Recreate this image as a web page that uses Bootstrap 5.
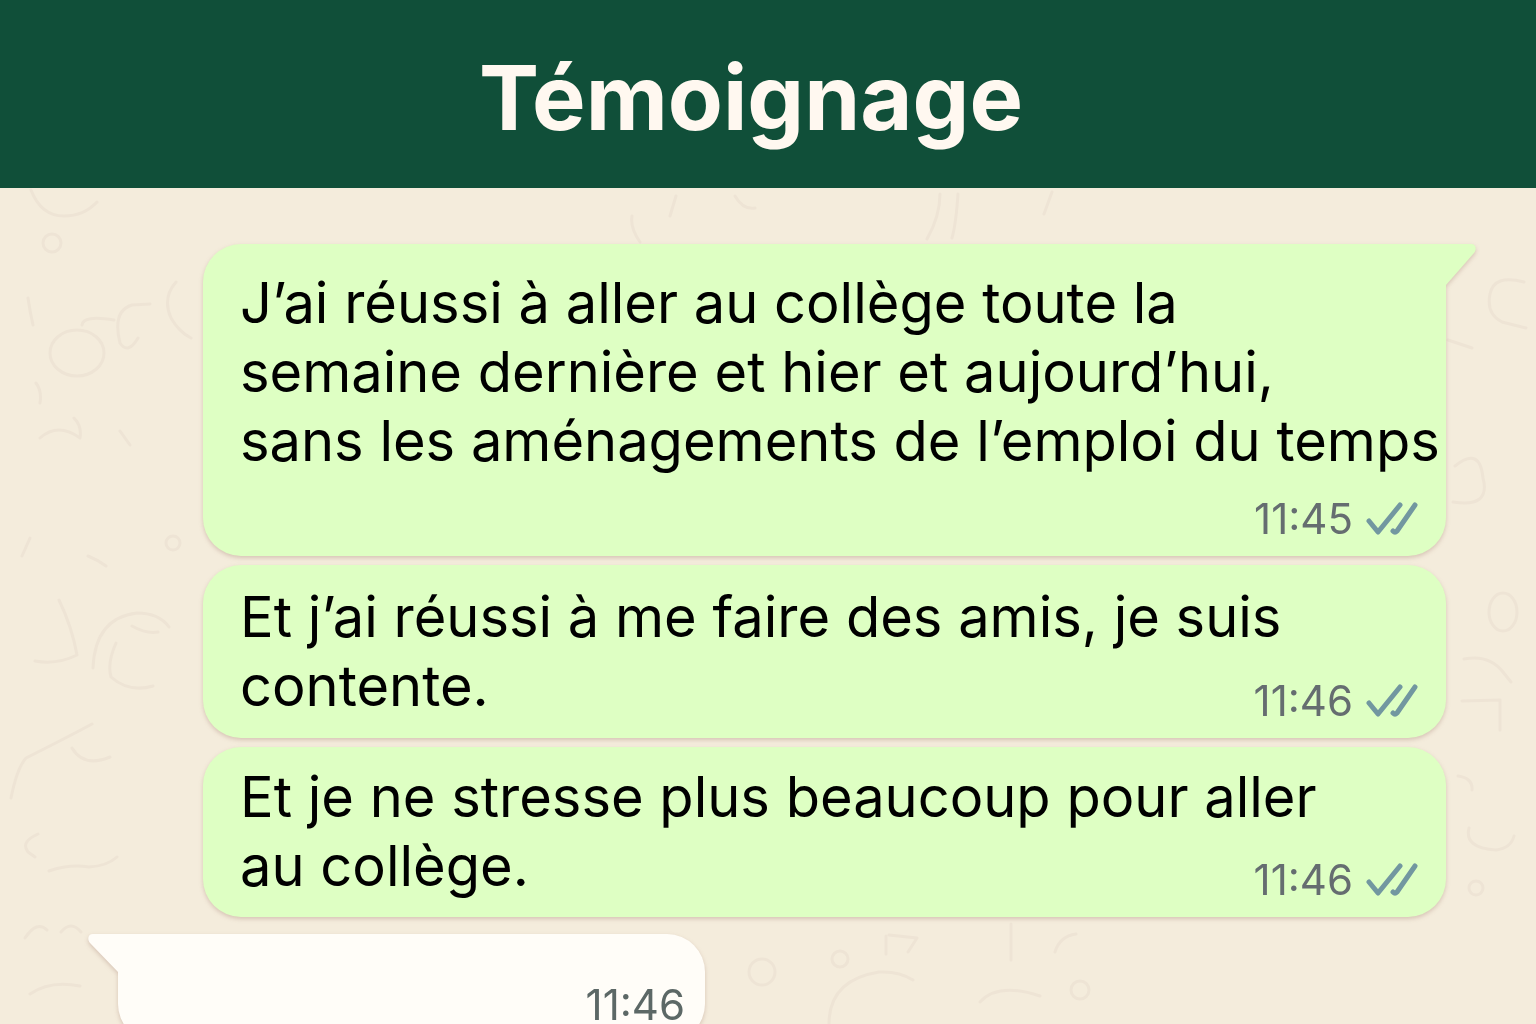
<!DOCTYPE html>
<html lang="fr">
<head>
<meta charset="utf-8">
<meta name="viewport" content="width=device-width, initial-scale=1">
<title>Témoignage</title>
<link href="https://cdn.jsdelivr.net/npm/bootstrap@5.3.0/dist/css/bootstrap.min.css" rel="stylesheet">
<style>
body{font-family:Inter,"Liberation Sans",sans-serif;background:#f4ecdc;color:#000}
.chat-header{background:#104f39;padding:42px 34px 34px 0}
.chat-title{font-size:90px;line-height:112px;font-weight:700;color:#fff8f0}
.chat-area{padding:56px 90px 0 118px}
.doodles{position:absolute;inset:0;width:100%;height:100%;fill:none;stroke:#eee4d5;stroke-width:3;stroke-linecap:round;stroke-linejoin:round}
.bubble-list{gap:9px}
.bubble{border-radius:38px;filter:drop-shadow(0 2px 2px rgba(130,80,70,.26))}
.sent{background:#deffc3;margin-left:85px;padding:16px 0 16px 37px}
.with-tail{border-top-right-radius:0;padding-top:25px;padding-bottom:80px}
.roomy{padding-top:18px;padding-bottom:17px}
.received{background:#fffdf8;width:587px;height:108px;border-top-left-radius:0;margin-top:8px}
.tail{position:absolute;top:0;width:31px;height:43px}
.tail-right{left:100%;margin-left:-1px;fill:#deffc3}
.tail-left{right:100%;margin-right:-1px;fill:#fffdf8}
.message-text{font-size:56px;line-height:69px}
.meta{position:absolute;right:28px;bottom:16px;gap:13px;font-size:42px;line-height:42px;color:#656d70}
.received .meta{right:20px;color:#5c6866}
.ticks{width:52px;height:34px;fill:none;stroke:#7297a0;stroke-width:5;stroke-linecap:round;stroke-linejoin:round}
</style>
</head>
<body>
<div class="d-flex flex-column vh-100 overflow-hidden">
<header class="chat-header flex-shrink-0 text-center">
<h1 class="chat-title m-0">Témoignage</h1>
</header>
<main class="chat-area position-relative flex-grow-1 overflow-hidden">
<svg class="doodles" viewBox="0 0 1536 836" preserveAspectRatio="xMidYMin slice" aria-hidden="true">
<path d="M31 2q10 26 33 26 20 0 33-14M82 137q1-10 32-5M120 155q-8-32 12-38l18-1M120 155q8 12 18-5M176 94q-14 16-5 36 8 14 20 20M28 110q2 14 5 27M36 195q6 8 4 20M40 250q18-16 40 0 2-12-6-20M120 243l10 14M30 350l-8 18M88 368q10 4 18 10"/>
<circle cx="52" cy="55" r="9"/><ellipse cx="77" cy="165" rx="27" ry="23"/><circle cx="173" cy="355" r="7"/>
<path d="M59 412q13 27 18 55-20 10-42 6M93 480q2-50 44-55 22 0 32 14M116 455q-9 20-5 34 18 16 42 9M132 438q14 8 26 6M11 610q6-30 15-40 40-20 66-34M72 560q12 20 38 9M38 646q-18 8-10 18l7 5M49 683q20-7 40-4 18-1 28-10M25 750q12-18 22-8M61 744q10-12 20 0M30 806q20-14 50-8"/>
<path d="M958 6q-2 30-6 44M940 6q0 22-13 45M676 8l-6 20M735 8q8 14 20 12M632 28q-2 12 8 26M1052 4l-8 22"/>
<ellipse cx="1503" cy="424" rx="14" ry="19"/><path d="M1524 94q-30-8-34 12-4 20 12 28l24 6M1448 152l24 8M1455 278q25-20 28 12 8 30-30 24M1464 471q25-5 39 13l8 10M1462 513l38-1v30M1458 588q15 2 14 14M1469 640q-5 20 27 22 15-2 18-14"/>
<path d="M889 747l28 3-9 14M886 748v18M1011 736v36M1055 764q5-16 21-18M829 836q0-44 50-52 20-1 34 8M980 814q18-20 60-6"/>
<circle cx="762" cy="784" r="13"/><circle cx="840" cy="771" r="8"/><circle cx="1080" cy="802" r="9"/><circle cx="1476" cy="700" r="7"/>
</svg>
<section class="bubble-list d-flex flex-column">
<article class="bubble sent with-tail position-relative">
<svg class="tail tail-right" viewBox="0 0 31 43" aria-hidden="true"><path d="M0 0H26C31 0 32 5 29 9L1 41V43H0Z"/></svg>
<p class="message-text text-nowrap m-0">J’ai réussi à aller au collège toute la<br>semaine dernière et hier et aujourd’hui,<br>sans les aménagements de l’emploi du temps</p>
<div class="meta d-flex align-items-center"><time>11:45</time><svg class="ticks" viewBox="0 0 52 34" role="img" aria-label="Lu"><path d="M3 19 12 30 34 3M27 29Q29 31 31 29L49 3"/></svg></div>
</article>
<article class="bubble sent roomy position-relative">
<p class="message-text text-nowrap m-0">Et j’ai réussi à me faire des amis, je suis<br>contente.</p>
<div class="meta d-flex align-items-center"><time>11:46</time><svg class="ticks" viewBox="0 0 52 34" role="img" aria-label="Lu"><path d="M3 19 12 30 34 3M27 29Q29 31 31 29L49 3"/></svg></div>
</article>
<article class="bubble sent position-relative">
<p class="message-text text-nowrap m-0">Et je ne stresse plus beaucoup pour aller<br>au collège.</p>
<div class="meta d-flex align-items-center"><time>11:46</time><svg class="ticks" viewBox="0 0 52 34" role="img" aria-label="Lu"><path d="M3 19 12 30 34 3M27 29Q29 31 31 29L49 3"/></svg></div>
</article>
<article class="bubble received position-relative">
<svg class="tail tail-left" viewBox="0 0 31 43" aria-hidden="true"><path d="M31 0H5C0 0-1 5 2 9L30 38V43H31Z"/></svg>
<div class="meta"><time>11:46</time></div>
</article>
</section>
</main>
</div>
<script src="https://cdn.jsdelivr.net/npm/bootstrap@5.3.0/dist/js/bootstrap.bundle.min.js"></script>
</body>
</html>
